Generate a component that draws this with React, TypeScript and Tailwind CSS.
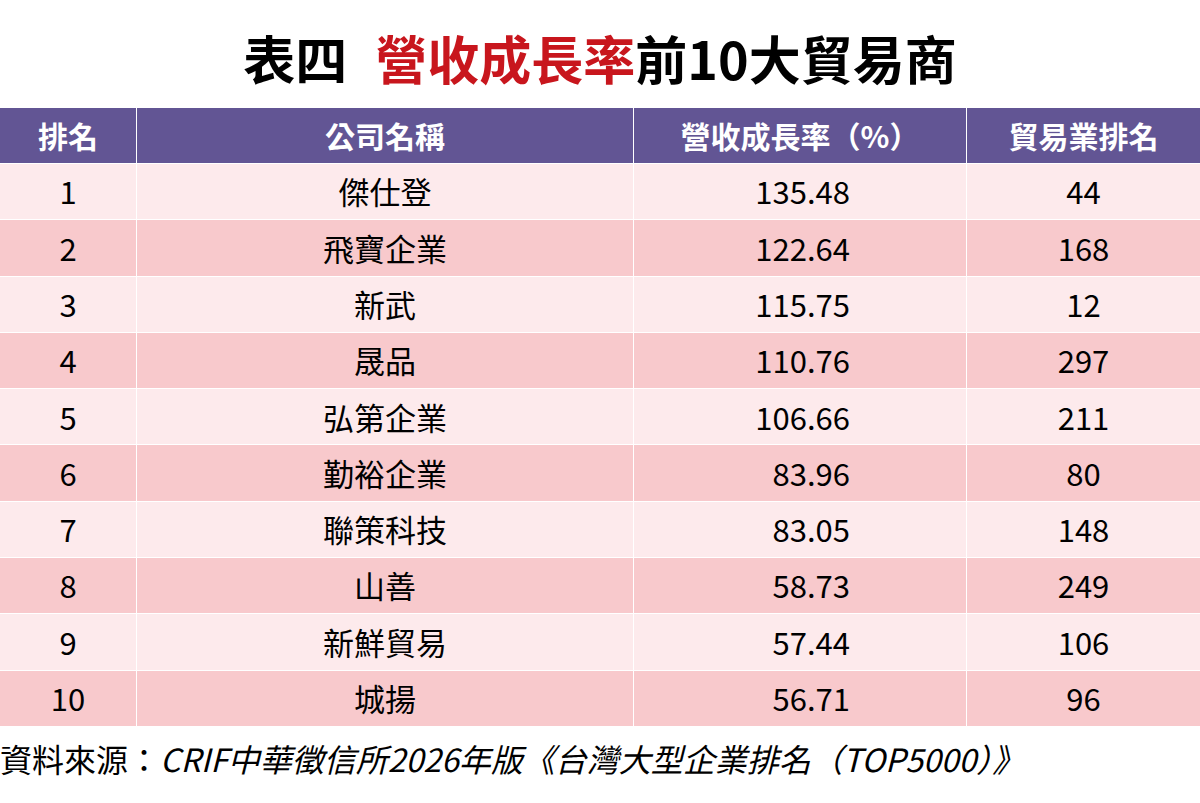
const rows = [
  { rank: 1, name: '傑仕登', growth: '135.48', tradeRank: 44 },
  { rank: 2, name: '飛寶企業', growth: '122.64', tradeRank: 168 },
  { rank: 3, name: '新武', growth: '115.75', tradeRank: 12 },
  { rank: 4, name: '晟品', growth: '110.76', tradeRank: 297 },
  { rank: 5, name: '弘第企業', growth: '106.66', tradeRank: 211 },
  { rank: 6, name: '勤裕企業', growth: '83.96', tradeRank: 80 },
  { rank: 7, name: '聯策科技', growth: '83.05', tradeRank: 148 },
  { rank: 8, name: '山善', growth: '58.73', tradeRank: 249 },
  { rank: 9, name: '新鮮貿易', growth: '57.44', tradeRank: 106 },
  { rank: 10, name: '城揚', growth: '56.71', tradeRank: 96 },
]

const font = { fontFamily: '"Noto Sans CJK TC", "Noto Sans", sans-serif' }

export default function App() {
  return (
    <div className="w-[1200px] h-[803px] bg-white overflow-hidden" style={font}>
      <h1 className="pt-[32px] h-[108px] text-center text-[52px] leading-none font-bold text-black">
        表四<span className="ml-[28px] text-[#c8161d]">營收成長率</span>前10大貿易商
      </h1>

      <div className="grid grid-cols-[136px_496px_332px_1fr] gap-x-px gap-y-px bg-white">
        {['排名', '公司名稱', '營收成長率（%）', '貿易業排名'].map((h) => (
          <div
            key={h}
            className="h-[55px] flex items-center justify-center bg-[#625594] text-white text-[30px] font-bold"
          >
            {h}
          </div>
        ))}
        {rows.map((r, i) => {
          const bg = i % 2 === 0 ? 'bg-[#fdeaec]' : 'bg-[#f8c9cc]'
          return (
            <div key={r.rank} className="contents text-[31px] text-black">
              <div className={`h-[55.3px] flex items-center justify-center ${bg}`}>{r.rank}</div>
              <div className={`h-[55.3px] flex items-center justify-center ${bg}`}>{r.name}</div>
              <div className={`h-[55.3px] flex items-center justify-end pr-[116px] ${bg}`}>{r.growth}</div>
              <div className={`h-[55.3px] flex items-center justify-center ${bg}`}>{r.tradeRank}</div>
            </div>
          )
        })}
      </div>

      <p className="mt-[16px] text-[32px] leading-none text-black whitespace-nowrap">
        資料來源：<span className="italic">CRIF中華徵信所2026年版《台灣大型企業排名（TOP5000）》</span>
      </p>
    </div>
  )
}
